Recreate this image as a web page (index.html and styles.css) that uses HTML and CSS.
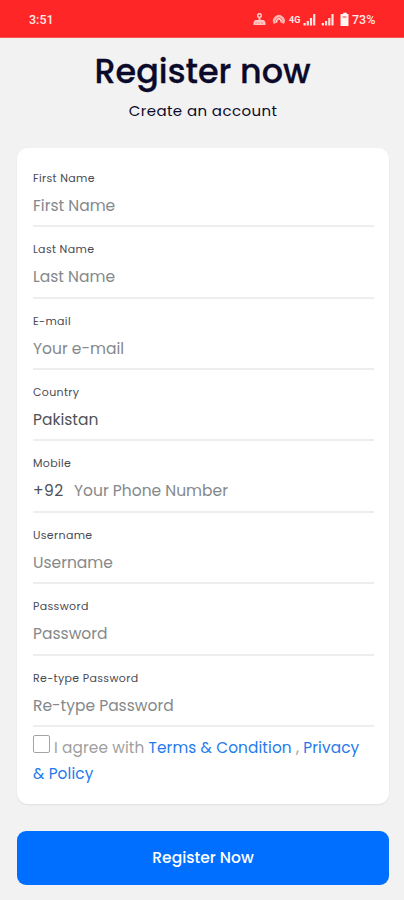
FILE: index.html
```html
<!DOCTYPE html>
<html lang="en">
<head>
<meta charset="utf-8">
<meta name="viewport" content="width=device-width, initial-scale=1">
<title>Register now</title>
<link rel="stylesheet" href="styles.css">
</head>
<body>
<header class="status">
  <span class="time">3:51</span>
  <svg class="tray" width="99" height="16" viewBox="0 0 99 16" fill="#ffe4df" aria-hidden="true">
    <circle cx="7.500" cy="3.600" r="1.800" fill="none" stroke="#ffd5cf" stroke-width="1.400"/>
    <path d="M6.500 6h2v2h-2zM3 8h9l1.500 2.500V13H1.500v-2.500z" opacity=".85"/>
    <path d="M3.500 11h1.500m1.200 0h1.500m1.200 0h2" stroke="#ff7b78" stroke-width="1"/>
    <path d="M23 11.400a4.600 4.600 0 1 1 7.800 0" fill="none" stroke="#ffb5af" stroke-width="2.600"/>
    <path d="M25 10.500a2.300 2.300 0 1 1 3.800 0" fill="none" stroke="#ffe4df" stroke-width="1.400"/>
    <path d="M51.500 11h2.200v2.500h-2.200zm3.200-2h2.200v4.500h-2.200zm3.200-3h2.200v7.500h-2.200zm3.200-4h2.200v11.500h-2.200z"/>
    <path d="M69.800 11h2.200v2.500h-2.200zm3.200-2h2.200v4.500H73zm3.200-3h2.200v7.500h-2.200zm3.200-4h2.200v11.500h-2.200z"/>
    <path d="M89.500 2h1.700V.7h3.600V2h1.700v12H88.500V2z" fill="#fff5f2"/>
    <path d="M90.600 5h3.800" stroke="#ff8a80" stroke-width="1.800"/>
  </svg>
  <span class="network">4G</span>
  <span class="battery">73%</span>
</header>
<main>
  <h1>Register now</h1>
  <p class="subtitle">Create an account</p>
  <form>
    <div class="card">
      <div class="field"><label>First Name</label><div class="value">First Name</div></div>
      <div class="field"><label>Last Name</label><div class="value">Last Name</div></div>
      <div class="field"><label>E-mail</label><div class="value">Your e-mail</div></div>
      <div class="field"><label>Country</label><div class="value filled">Pakistan</div></div>
      <div class="field"><label>Mobile</label><div class="value"><span class="prefix">+92</span><span>Your Phone Number</span></div></div>
      <div class="field"><label>Username</label><div class="value">Username</div></div>
      <div class="field"><label>Password</label><div class="value">Password</div></div>
      <div class="field"><label>Re-type Password</label><div class="value">Re-type Password</div></div>
      <p class="terms"><span class="box"></span>I agree with <a>Terms &amp; Condition</a> , <a>Privacy<br>&amp; Policy</a></p>
    </div>
    <button type="button">Register Now</button>
  </form>
</main>
</body>
</html>
```
FILE: styles.css
```css
* { box-sizing: border-box; }
body {
  margin: 0;
  height: 900px;
  overflow: hidden;
  background: #f2f2f2;
  color: #0c0a2b;
  font-family: Poppins, Inter, sans-serif;
}
.status {
  position: relative;
  display: flex;
  align-items: center;
  height: 38px;
  padding: 2px 27px 0 29px;
  background: #ff2628;
  border-bottom: 1px solid #f65353;
  color: #ffe9e5;
  font: 500 12.5px/16px Roboto, sans-serif;
}
.time { flex: 1; }
.network { position: absolute; left: 289px; top: 12px; font-size: 9px; font-weight: 700; }
.tray { margin-right: 1px; }
.battery { width: 25px; white-space: nowrap; }
h1 {
  margin: 11px 0 0;
  text-align: center;
  font-size: 33.4px;
  line-height: 46px;
  font-weight: 500;
  text-indent: 1px;
  -webkit-text-stroke: .3px #0c0a2b;
}
.subtitle {
  margin: 4px 0 0;
  text-align: center;
  font-size: 15px;
  line-height: 24px;
  letter-spacing: .4px;
  text-indent: 2px;
}
.card {
  height: 656px;
  margin: 25px 15px 0 17px;
  padding: 8px 15px 0 16px;
  background: #fff;
  border-radius: 11px;
  box-shadow: 0 1px 2px rgba(0, 0, 0, .08);
}
.field {
  height: 71.36px;
  padding-top: 14px;
  border-bottom: 2px solid #eeeeef;
}
label {
  display: block;
  color: #4a4a52;
  font-size: 11px;
  line-height: 17px;
  font-weight: 400;
  letter-spacing: .35px;
}
.value {
  display: flex;
  margin-top: 7px;
  color: #85898b;
  font-size: 15.5px;
  line-height: 23px;
  font-weight: 400;
  letter-spacing: 0;
}
.filled, .prefix { color: #505257; }
.prefix { width: 41px; letter-spacing: .4px; }
.terms {
  margin: 8px 0 0;
  color: #a0a0a0;
  font-size: 15.3px;
  line-height: 26px;
  letter-spacing: .12px;
  white-space: nowrap;
}
.terms a { color: #1f7aec; }
.box {
  display: inline-block;
  width: 17px;
  height: 18px;
  margin-right: 4px;
  vertical-align: 0;
  border: 1.5px solid #a4a4a4;
  border-radius: 2px;
}
button {
  display: block;
  width: 372px;
  height: 54px;
  margin: 27px 0 0 17px;
  padding: 0 0 2px;
  border: 0;
  border-radius: 9px;
  background: #006fff;
  color: #fff;
  font: inherit;
  font-size: 15.5px;
  font-weight: 500;
}
```
